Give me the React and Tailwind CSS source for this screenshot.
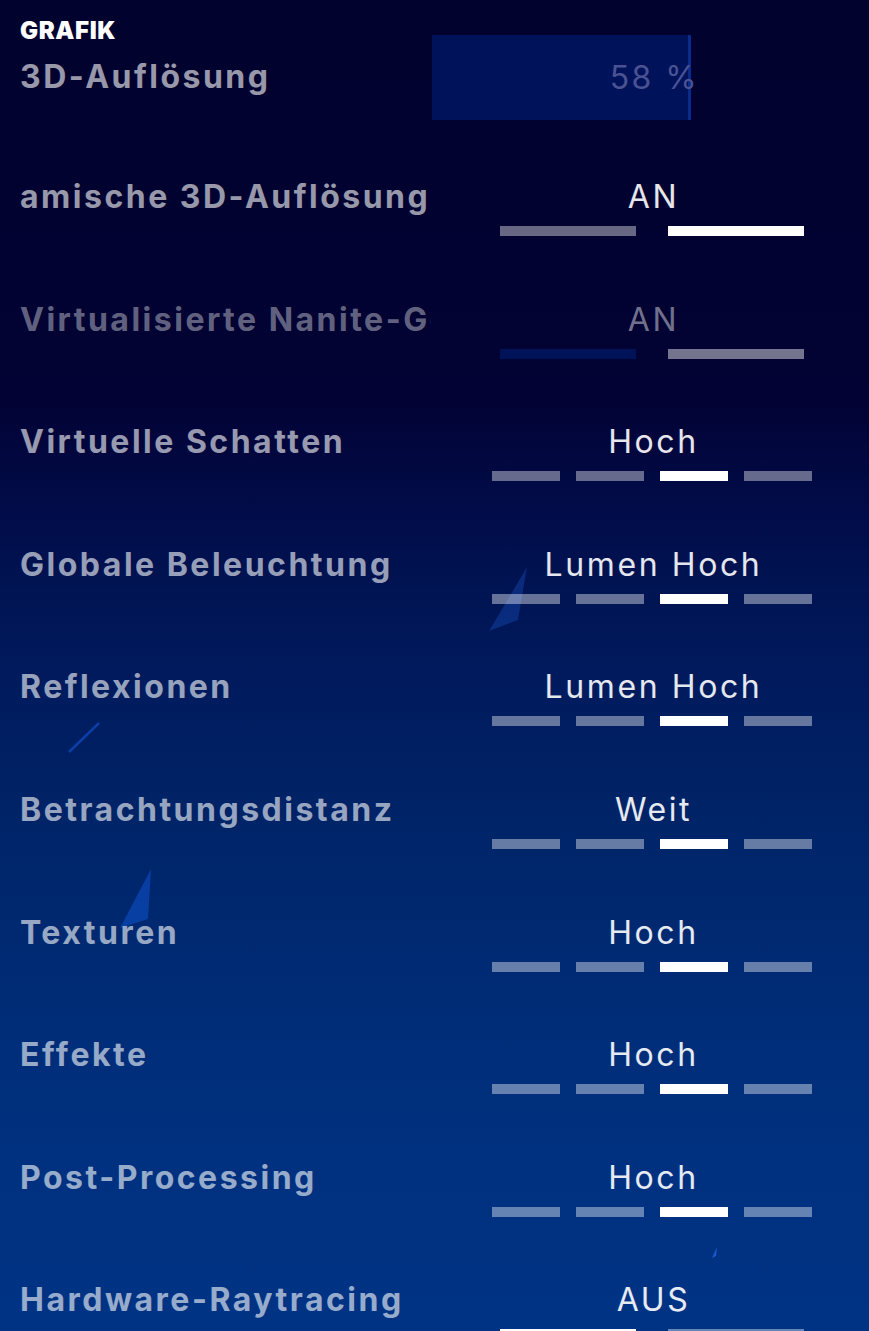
import React from 'react';

const font = { fontFamily: 'Inter, "Noto Sans", sans-serif' };

const settings = [
  { label: 'amische 3D-Auflösung', value: 'AN', steps: 2, active: 1 },
  { label: 'Virtualisierte Nanite-Geometrie', value: 'AN', steps: 2, active: 1, disabled: true },
  { label: 'Virtuelle Schatten', value: 'Hoch', steps: 4, active: 2 },
  { label: 'Globale Beleuchtung', value: 'Lumen Hoch', steps: 4, active: 2 },
  { label: 'Reflexionen', value: 'Lumen Hoch', steps: 4, active: 2 },
  { label: 'Betrachtungsdistanz', value: 'Weit', steps: 4, active: 2 },
  { label: 'Texturen', value: 'Hoch', steps: 4, active: 2 },
  { label: 'Effekte', value: 'Hoch', steps: 4, active: 2 },
  { label: 'Post-Processing', value: 'Hoch', steps: 4, active: 2 },
  { label: 'Hardware-Raytracing', value: 'AUS', steps: 2, active: 0 },
];

// faint shards from the backdrop art
const Shards = () => (
  <svg className="pointer-events-none absolute inset-0" width="869" height="1331" viewBox="0 0 869 1331">
    <polygon points="527,567 489,631 518,620" fill="#1e56c8" fillOpacity="0.35" />
    <line x1="69" y1="752" x2="99" y2="723" stroke="#0b3ea6" strokeWidth="2.5" />
    <polygon points="151,869 120,928 148,919" fill="#0a45b0" fillOpacity="0.8" />
    <polygon points="717,1247 712,1258 716,1256" fill="#1a5ad0" />
  </svg>
);

const StepBar = ({ steps, active, disabled }) => {
  if (steps === 2) {
    return (
      <div className="mt-[13px] flex justify-between px-2">
        {[0, 1].map((i) => {
          let color = i === active ? 'bg-white' : 'bg-white/40';
          // locked option: selected slot greyed, the other one sunk into the panel
          if (disabled) color = i === active ? 'bg-white/45' : 'bg-[#001258]';
          return <div key={i} className={`h-[10px] w-[136px] ${color}`} />;
        })}
      </div>
    );
  }
  return (
    <div className="mt-[13px] flex justify-between">
      {Array.from({ length: steps }).map((_, i) => (
        <div key={i} className={`h-[10px] w-[68px] ${i === active ? 'bg-white' : 'bg-white/40'}`} />
      ))}
    </div>
  );
};

const SettingRow = ({ label, value, steps, active, disabled }) => (
  <div className="flex h-[122.6px] items-start">
    <div
      className={`w-[411px] shrink-0 whitespace-nowrap text-[32px] font-bold leading-[32px] tracking-[2.5px] ${
        disabled ? 'overflow-hidden text-white/40' : 'text-white/60'
      }`}
    >
      {label}
    </div>
    <div className="ml-[61px] w-[320px] shrink-0">
      <div
        className={`pl-[3px] text-center text-[32px] leading-[32px] tracking-[2.6px] ${
          disabled ? 'text-white/45' : 'text-white/90'
        }`}
      >
        {value}
      </div>
      <StepBar steps={steps} active={active} disabled={disabled} />
    </div>
  </div>
);

export default function App() {
  return (
    <div
      className="relative h-[1331px] w-[869px] overflow-hidden bg-[linear-gradient(180deg,#02022e_0%,#020234_30%,#010c48_38%,#001a5c_50%,#002468_62%,#002c76_75%,#003180_88%,#003384_100%)]"
      style={font}
    >
      <Shards />
      <div className="relative pl-5 pt-[19px]">
        {/* resolution slider */}
        <div className="flex h-[101px] items-start">
          <div className="w-[411px] shrink-0">
            <div className="text-[24px] font-black leading-[24px] tracking-[0.6px] text-white">GRAFIK</div>
            <div className="mt-[18px] text-[32px] font-bold leading-[32px] tracking-[2.5px] text-white/60">
              3D-Auflösung
            </div>
          </div>
          <div className="ml-px mt-4 flex h-[85px] w-[259px] items-center justify-end border-r-[3px] border-[#0a2a8e] bg-[#00125a]">
            <span className="-mr-[11px] text-[32px] leading-[32px] tracking-[2.4px] text-[#4a5294]">58 %</span>
          </div>
        </div>
        <div className="mt-[61px]">
          {settings.map((s) => (
            <SettingRow key={s.label} {...s} />
          ))}
        </div>
      </div>
    </div>
  );
}
